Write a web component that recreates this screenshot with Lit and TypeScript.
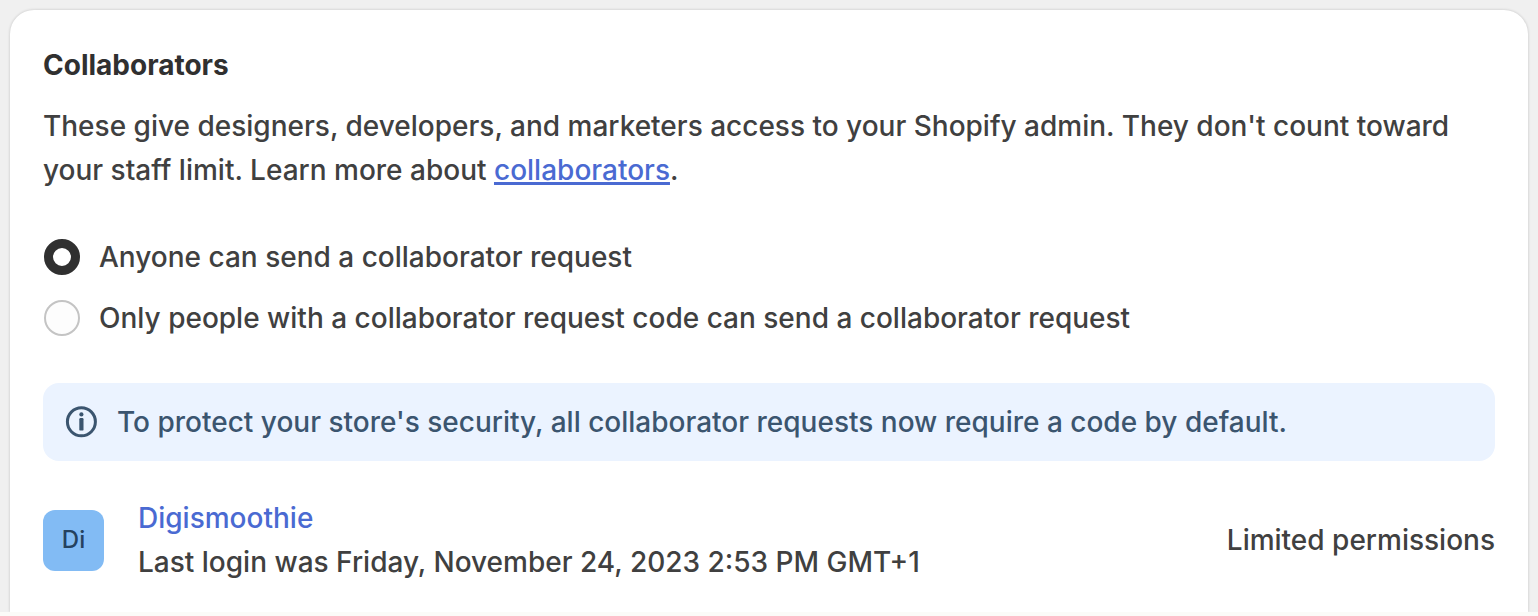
import { LitElement, html, css } from "lit";
import { customElement, state } from "lit/decorators.js";

@customElement("app-root")
export class AppRoot extends LitElement {
  static styles = css`
    :host {
      display: block;
      box-sizing: border-box;
      min-height: 100vh;
      overflow: hidden;
      padding: 10px 10px 0;
      border-bottom: 4px solid #fbfbf8;
      background: #f0f0f0;
      color: #404040;
      font-family: Inter, sans-serif;
      font-size: 28px;
      font-weight: 450;
      line-height: 44px;
    }
    * {
      box-sizing: border-box;
    }
    .card {
      min-height: calc(100vh - 14px);
      padding: 33px 33px 24px;
      border-radius: 24px 24px 0 0;
      background: #fff;
      box-shadow: 0 0 3px rgba(0, 0, 0, 0.2);
    }
    h2 {
      margin: 0;
      color: #303030;
      font-size: 28px;
      font-weight: 650;
      line-height: 44px;
    }
    p {
      margin: 0;
    }
    .intro {
      margin-top: 17px;
    }
    a {
      color: #4a6ad2;
    }
    .intro a {
      text-decoration-thickness: 3px;
      text-underline-offset: 2px;
      text-decoration-skip-ink: none;
    }
    .choices {
      display: grid;
      gap: 17px;
      margin: 43px 0;
      padding: 0 1px;
      border: 0;
    }
    .choice {
      display: flex;
      align-items: center;
      gap: 19px;
    }
    input {
      appearance: none;
      flex: none;
      width: 36px;
      height: 36px;
      margin: 0;
      border: 2px solid #c4c4c4;
      border-radius: 50%;
      background: #fdfdfd;
    }
    input:checked {
      border: 9px solid #303030;
      background: #fff;
    }
    .banner {
      display: flex;
      align-items: center;
      gap: 19px;
      padding: 17px 21px;
      border-radius: 16px;
      background: #ebf3ff;
      color: #3b556f;
    }
    .banner svg {
      flex: none;
    }
    .member {
      display: flex;
      align-items: center;
      gap: 34px;
      margin-top: 35px;
    }
    .avatar {
      display: grid;
      place-items: center;
      flex: none;
      width: 61px;
      height: 61px;
      border-radius: 12px;
      background: #82bbf4;
      color: #25425f;
      font-size: 24px;
    }
    .details {
      flex: 1;
    }
    .details a {
      text-decoration: none;
    }
  `;

  @state() private access = "anyone";

  private choice(value: string, label: string) {
    return html`<label class="choice">
      <input
        type="radio"
        name="access"
        value=${value}
        .checked=${this.access === value}
        @change=${() => (this.access = value)}
      />
      <span>${label}</span>
    </label>`;
  }

  render() {
    return html`
      <section class="card">
        <h2>Collaborators</h2>
        <p class="intro">
          These give designers, developers, and marketers access to your Shopify admin. They don't
          count toward your staff limit. Learn more about <a href="#collaborators">collaborators</a>.
        </p>
        <fieldset class="choices" aria-label="Collaborator requests">
          ${this.choice("anyone", "Anyone can send a collaborator request")}
          ${this.choice("code", "Only people with a collaborator request code can send a collaborator request")}
        </fieldset>
        <div class="banner">
          <svg width="34" height="34" viewBox="0 0 34 34" fill="none" aria-hidden="true">
            <circle cx="17.4" cy="16.8" r="14" stroke="currentColor" stroke-width="3" />
            <rect x="15.3" y="13" width="4.2" height="12.6" rx="1.2" fill="currentColor" />
            <circle cx="17.4" cy="9.4" r="2.1" fill="currentColor" />
          </svg>
          <p>To protect your store's security, all collaborator requests now require a code by default.</p>
        </div>
        <div class="member">
          <span class="avatar" aria-hidden="true">Di</span>
          <div class="details">
            <a href="#digismoothie">Digismoothie</a>
            <p>Last login was Friday, November 24, 2023 2:53 PM GMT+1</p>
          </div>
          <span>Limited permissions</span>
        </div>
      </section>
    `;
  }
}
